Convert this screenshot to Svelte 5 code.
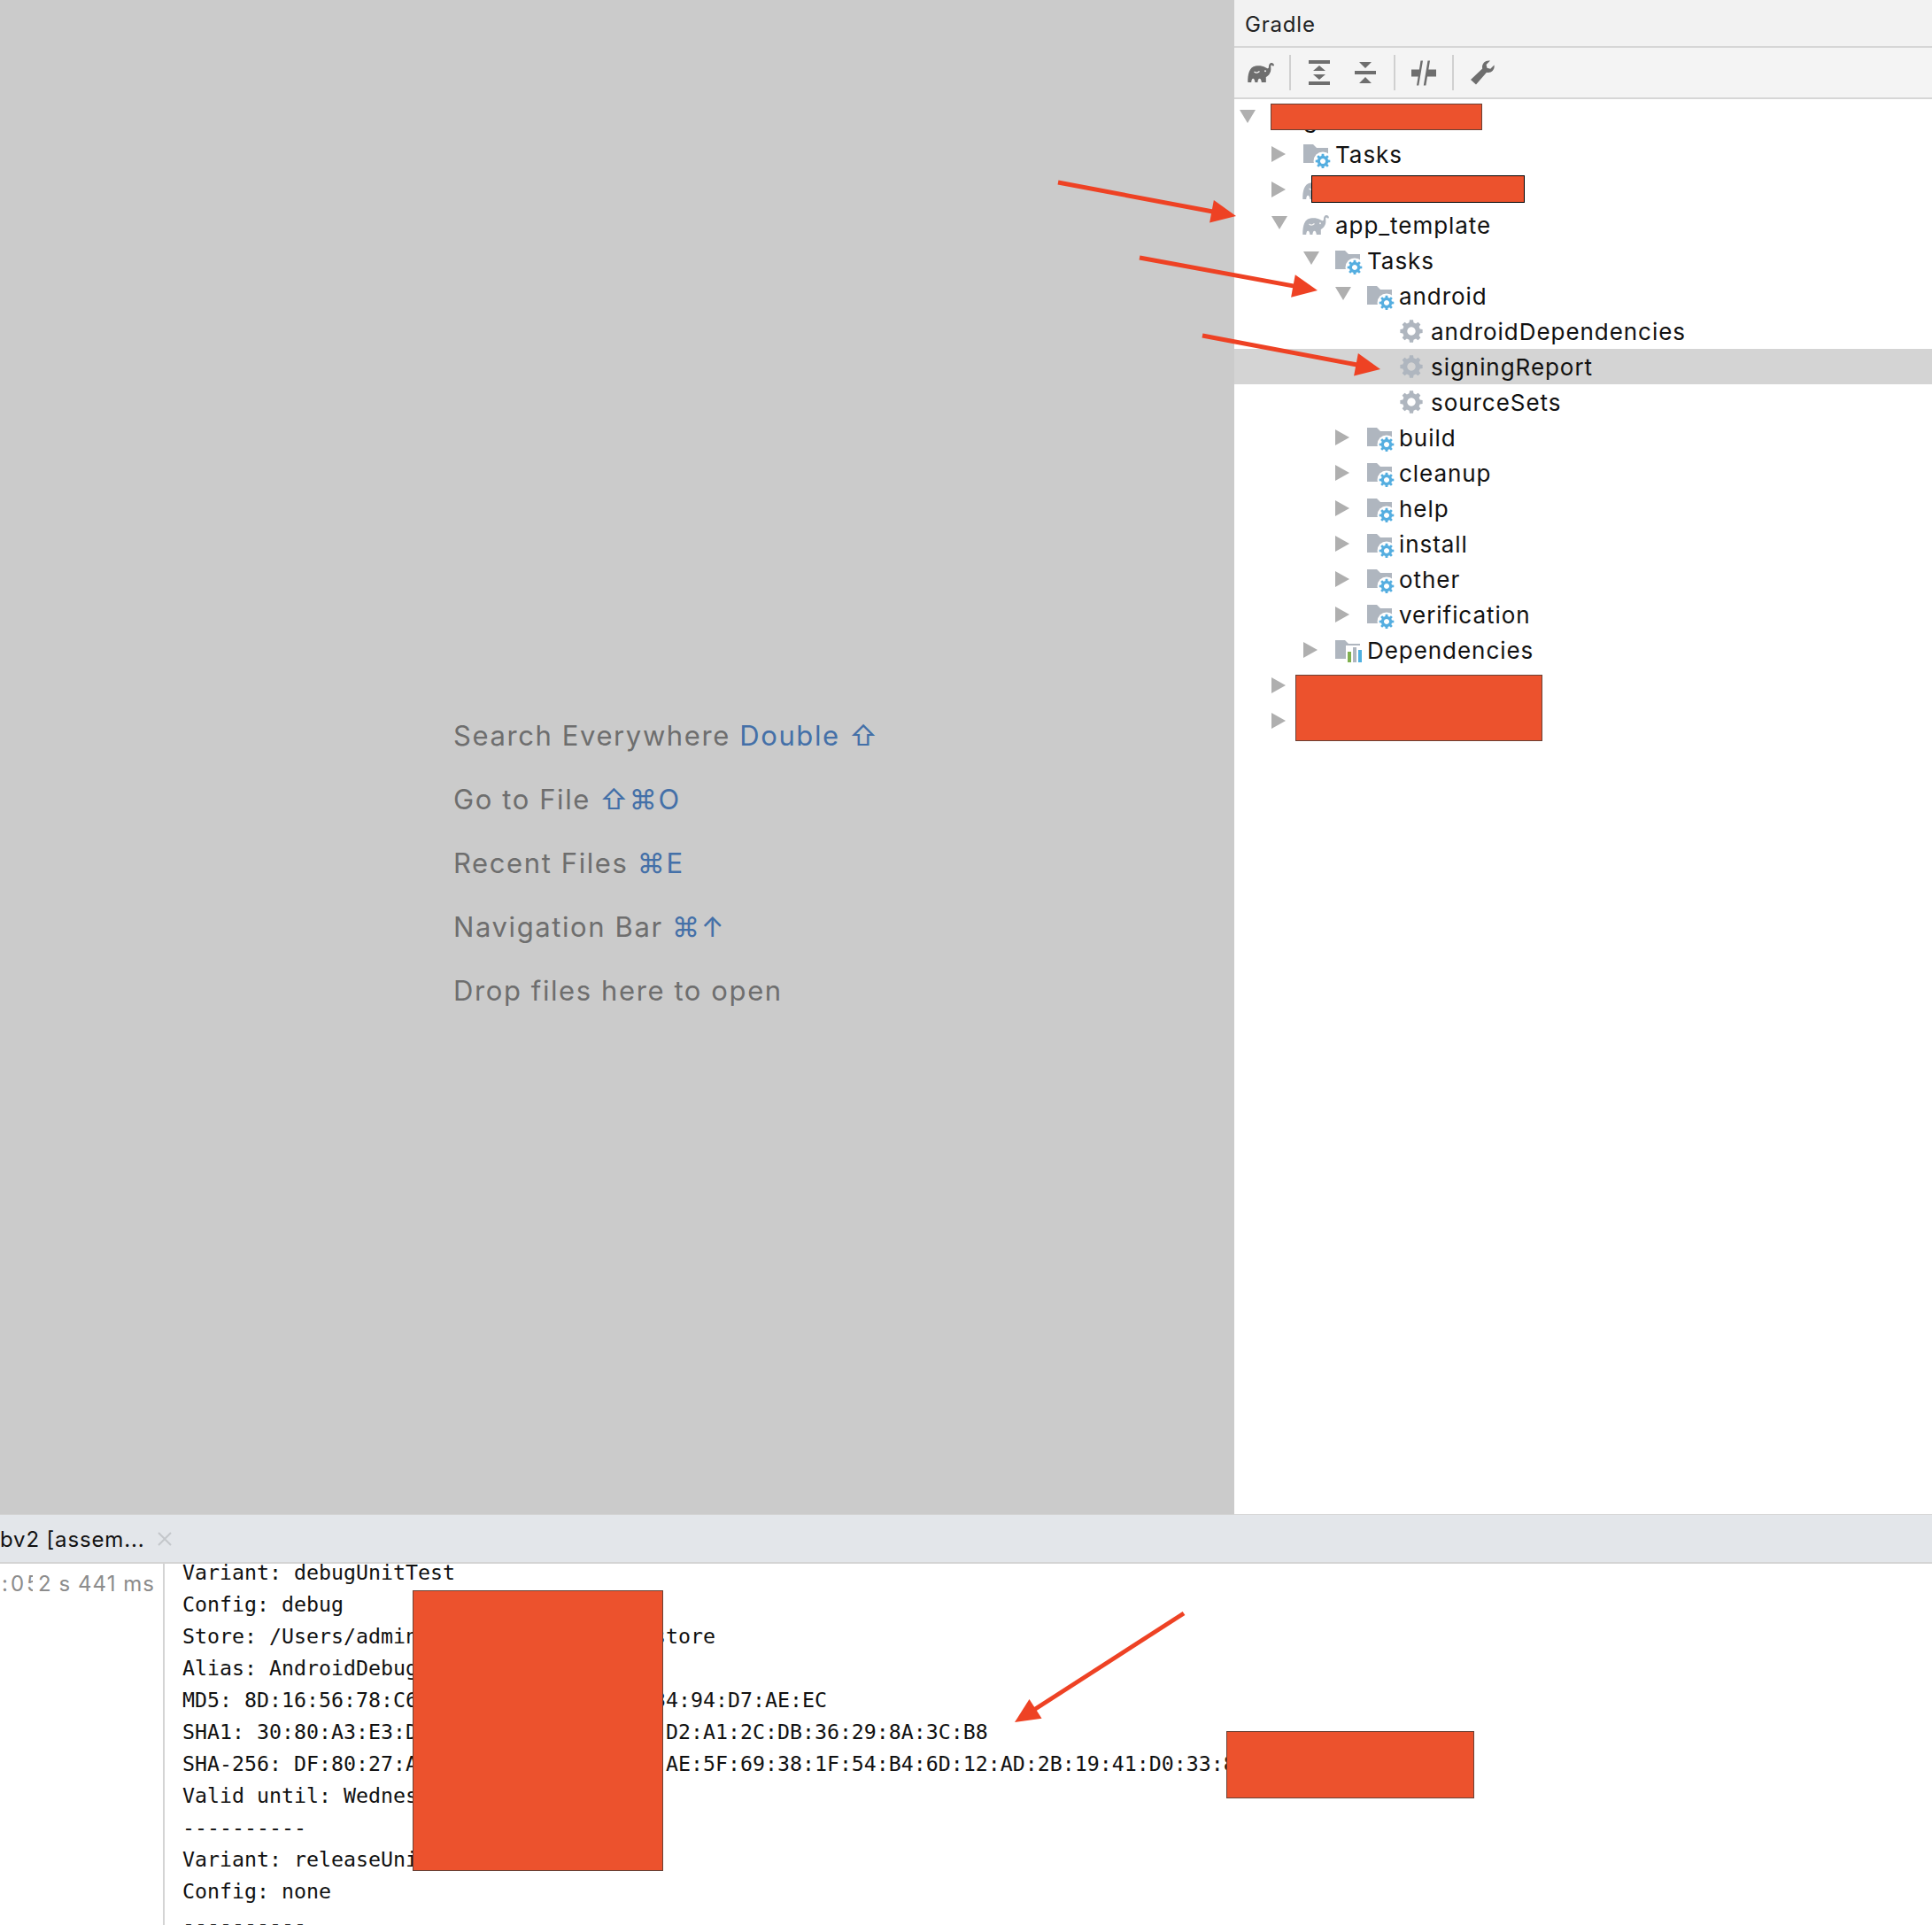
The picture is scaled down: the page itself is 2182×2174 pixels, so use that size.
<script>
  const rows = [
    { d: 0, open: true, icon: 'none', label: 'g' },
    { d: 1, icon: 'tasks', label: 'Tasks' },
    { d: 1, icon: 'ele', label: '' },
    { d: 1, open: true, icon: 'ele', label: 'app_template' },
    { d: 2, open: true, icon: 'tasks', label: 'Tasks' },
    { d: 3, open: true, icon: 'tasks', label: 'android' },
    { d: 4, leaf: true, icon: 'gear', label: 'androidDependencies' },
    { d: 4, leaf: true, icon: 'gear', label: 'signingReport', sel: true },
    { d: 4, leaf: true, icon: 'gear', label: 'sourceSets' },
    { d: 3, icon: 'tasks', label: 'build' },
    { d: 3, icon: 'tasks', label: 'cleanup' },
    { d: 3, icon: 'tasks', label: 'help' },
    { d: 3, icon: 'tasks', label: 'install' },
    { d: 3, icon: 'tasks', label: 'other' },
    { d: 3, icon: 'tasks', label: 'verification' },
    { d: 2, icon: 'deps', label: 'Dependencies' },
    { d: 1, icon: 'ele', label: '' },
    { d: 1, icon: 'ele', label: '' }
  ];

  const consoleLines = [
    'Variant: debugUnitTest',
    'Config: debug',
    'Store: /Users/admin/.android/debug.keystore',
    'Alias: AndroidDebugKey',
    'MD5: 8D:16:56:78:C6                   34:94:D7:AE:EC',
    'SHA1: 30:80:A3:E3:D                    D2:A1:2C:DB:36:29:8A:3C:B8',
    'SHA-256: DF:80:27:A                    AE:5F:69:38:1F:54:B4:6D:12:AD:2B:19:41:D0:33:8',
    'Valid until: Wednesday',
    '----------',
    'Variant: releaseUnitTest',
    'Config: none',
    '----------'
  ];

  const hints = [
    { t: 'Search Everywhere', k: 'Double ⇧' },
    { t: 'Go to File', k: '⇧⌘O' },
    { t: 'Recent Files', k: '⌘E' },
    { t: 'Navigation Bar', k: '⌘↑' },
    { t: 'Drop files here to open', k: '' }
  ];

  const boxes = [
    { c: 'box', x: 1435, y: 117, w: 239, h: 30 },
    { c: 'box dark', x: 1481, y: 198, w: 241, h: 31 },
    { c: 'box', x: 1463, y: 762, w: 279, h: 75 },
    { c: 'box', x: 466, y: 1796, w: 283, h: 317 },
    { c: 'box', x: 1385, y: 1955, w: 280, h: 76 }
  ];

  function gearPath(cx, cy, rOut, rIn, teeth) {
    let d = '';
    const step = (Math.PI * 2) / teeth;
    for (let i = 0; i < teeth; i++) {
      const a = i * step - Math.PI / 2;
      const pts = [
        [a - step * 0.32, rIn],
        [a - step * 0.2, rOut],
        [a + step * 0.2, rOut],
        [a + step * 0.32, rIn]
      ];
      for (const [an, r] of pts) {
        d += (d ? 'L' : 'M') + (cx + r * Math.cos(an)).toFixed(2) + ' ' + (cy + r * Math.sin(an)).toFixed(2);
      }
    }
    return d + 'Z';
  }

  function arrow(x1, y1, x2, y2) {
    const len = Math.hypot(x2 - x1, y2 - y1);
    const ux = (x2 - x1) / len;
    const uy = (y2 - y1) / len;
    const bx = x2 - ux * 28;
    const by = y2 - uy * 28;
    const nx = -uy * 13;
    const ny = ux * 13;
    return {
      x1, y1,
      x2: bx + ux * 4,
      y2: by + uy * 4,
      head: `${x2},${y2} ${bx + nx},${by + ny} ${bx - nx},${by - ny}`
    };
  }

  const arrows = [
    arrow(1195, 206, 1396, 244),
    arrow(1287, 291, 1488, 328),
    arrow(1358, 379, 1559, 417),
    arrow(1337, 1822, 1146, 1945)
  ];

  const ELE = 'M0.3 23C0 14 2 5.5 9 4.5C13 3.8 17 4.3 20 6C21.5 7 23.2 8 23.8 6.5C24.2 5 23.5 3 25.5 1.5C27.5 .3 29.8 1.5 30 4.2L28 4.4C27.8 3.2 26.4 3.1 26.2 4.6C26.2 7 27 10 25 13C24 15 22 16.5 20.8 17L20.8 23H15.8C15.6 20.5 14.8 18.8 13.5 18.8C12.2 18.8 11.6 20.5 11.4 23H8.4C8.2 20.5 7.4 18.8 6.2 18.8C5 18.8 4.4 20.5 4.2 23Z';
  const FOLDER = 'M0 0H11L15 4H28V21H0Z';
  const blueGear = gearPath(8, 8, 8.4, 6.2, 8);
  const grayGear = gearPath(13, 13, 12.8, 10, 8);
</script>

{#snippet elephant(cls)}
  <svg class={cls} width="30" height="24" viewBox="0 0 30 24">
    <path d={ELE} />
    <path class="eye" d="M7.5 11c2 1.6 4 1.4 6-.4" />
    <circle class="dot" cx="20" cy="10.2" r="1" />
  </svg>
{/snippet}

{#snippet treeIcon(kind)}
  {#if kind === 'tasks'}
    <svg class="ti" width="32" height="32" viewBox="0 0 32 32">
      <path class="fold" d={FOLDER} transform="translate(0 5)" />
      <g transform="translate(14 16)">
        <circle cx="8" cy="8" r="10.5" fill="#fff" />
        <path class="blue" fill-rule="evenodd" d="{blueGear}M8 5a3 3 0 1 0 .01 0Z" />
      </g>
    </svg>
  {:else if kind === 'deps'}
    <svg class="ti" width="32" height="32" viewBox="0 0 32 32">
      <path class="fold" d={FOLDER} transform="translate(0 5)" />
      <rect x="12" y="11" width="18" height="19" fill="#fff" />
      <rect x="14" y="18" width="4" height="12" fill="#7fb04f" />
      <rect x="20" y="13" width="4" height="17" fill="#afb6bf" />
      <rect x="26" y="16" width="4" height="14" fill="#4fb0e0" />
    </svg>
  {:else if kind === 'gear'}
    <svg class="ti gearicon" width="26" height="26" viewBox="0 0 26 26">
      <path class="fold" fill-rule="evenodd" d="{grayGear}M13 8.3a4.7 4.7 0 1 0 .01 0Z" />
    </svg>
  {:else if kind === 'ele'}
    {@render elephant('ele-tree')}
  {/if}
{/snippet}

<div class="root">
  <div class="top">
    <main class="welcome">
      {#each hints as h}
        <p class="hint">{h.t}{' '}<span class="key">{h.k}</span></p>
      {/each}
    </main>

    <aside class="gradle">
      <header class="title">Gradle</header>
      <div class="toolbar">
        <span class="slot">{@render elephant('ele-tool')}</span>
        <i class="sep"></i>
        <div class="group">
          <span class="slot">
            <svg width="24" height="28" viewBox="0 0 24 28" class="tool">
              <path d="M0 0H24V4H0ZM0 24H24V28H0ZM12 6L19 12H5ZM5 16H19L12 22Z" />
            </svg>
          </span>
          <span class="slot">
            <svg width="24" height="24" viewBox="0 0 24 24" class="tool">
              <path d="M0 10H24V14H0ZM5 0H19L12 7ZM12 17L19 24H5Z" />
            </svg>
          </span>
        </div>
        <i class="sep"></i>
        <span class="slot">
          <svg width="28" height="29" viewBox="0 0 28 28" class="tool">
            <path d="M0 10H9V18H0ZM17 10H28V18H17ZM10.5 0H13L8.3 28H6ZM18.5 0H21L16.4 28H13.8Z" />
          </svg>
        </span>
        <i class="sep"></i>
        <span class="slot">
          <svg width="28" height="28" viewBox="0 0 28 28" class="tool">
            <path d="M27.5 5.5C28.5 10.5 24.5 15 19 13.8L7 27.5L1 22L14.2 9.5C13 4 17.5 -.5 23 .6L18.6 5L19.5 8.8L23.2 9.8Z" />
          </svg>
        </span>
      </div>
      <div class="tree">
        {#each rows as r}
          <div class="row" class:sel={r.sel} style="padding-left:{6 + r.d * 36}px">
            <span class="chev">
              {#if !r.leaf}
                {#if r.open}
                  <svg class="down" width="18" height="15" viewBox="0 0 18 15"><path d="M0 0H18L9 15Z" /></svg>
                {:else}
                  <svg width="16" height="18" viewBox="0 0 16 18"><path d="M0 0L16 9L0 18Z" /></svg>
                {/if}
              {/if}
            </span>
            <span class="icon">{@render treeIcon(r.icon)}</span>
            <span class="label">{r.label}</span>
          </div>
        {/each}
      </div>
    </aside>
  </div>

  <section class="run">
    <div class="tabs">
      <span class="tabname">bv2 [assem...</span>
      <svg class="close" width="16" height="16" viewBox="0 0 16 16"><path d="M1 1L15 15M15 1L1 15" /></svg>
    </div>
    <div class="output">
      <div class="timecol">
        <span class="clip">:05</span><span class="dur">2 s 441 ms</span>
      </div>
      <pre class="log">{#each consoleLines as l}<div class="ln">{l}</div>{/each}</pre>
    </div>
  </section>

  {#each boxes as b}
    <div class={b.c} style="left:{b.x}px;top:{b.y}px;width:{b.w}px;height:{b.h}px"></div>
  {/each}

  <svg class="arrows" width="2182" height="2174" viewBox="0 0 2182 2174">
    {#each arrows as a}
      <line x1={a.x1} y1={a.y1} x2={a.x2} y2={a.y2} />
      <polygon points={a.head} />
    {/each}
  </svg>
</div>

<style>
  :global(body) {
    margin: 0;
    background: #fff;
  }
  .root {
    position: relative;
    width: 2182px;
    height: 2174px;
    overflow: hidden;
    display: flex;
    flex-direction: column;
    font-family: Inter, "DejaVu Sans", sans-serif;
    color: #111;
  }
  .top {
    display: flex;
    height: 1711px;
    flex: none;
    border-bottom: 1px solid #d4d4d4;
    box-sizing: border-box;
  }
  .welcome {
    width: 1394px;
    flex: none;
    background: #cbcbcb;
    box-sizing: border-box;
    padding: 795px 0 0 512px;
  }
  .hint {
    margin: 0;
    height: 72px;
    line-height: 72px;
    font-size: 31px;
    color: #6e6e6e;
    letter-spacing: 1.6px;
    white-space: nowrap;
  }
  .key {
    color: #4470a8;
  }
  .gradle {
    flex: 1;
    background: #fff;
    min-width: 0;
  }
  .title {
    height: 52px;
    line-height: 56px;
    background: #f2f2f2;
    border-bottom: 2px solid #d6d6d6;
    padding-left: 12px;
    font-size: 24px;
    letter-spacing: 0.8px;
    color: #222;
  }
  .toolbar {
    height: 58px;
    box-sizing: border-box;
    background: #f4f4f4;
    border-bottom: 2px solid #d6d6d6;
    display: flex;
    align-items: center;
    gap: 18px;
    padding-left: 16px;
  }
  .group {
    display: flex;
    gap: 24px;
  }
  .slot {
    width: 28px;
    display: flex;
    justify-content: center;
    align-items: center;
  }
  .sep {
    width: 2px;
    height: 40px;
    background: #d0d0d0;
  }
  .tool {
    fill: #6e6e6e;
  }
  .ele-tool {
    fill: #6e6e6e;
    flex: none;
  }
  .ele-tree {
    fill: #afb6bf;
    flex: none;
    margin-left: -1px;
  }
  .eye {
    fill: none;
    stroke: #f4f4f4;
    stroke-width: 1.3;
  }
  .dot {
    fill: #f4f4f4;
  }
  .tree {
    padding-top: 2px;
  }
  .row {
    height: 40px;
    display: flex;
    align-items: center;
    box-sizing: border-box;
  }
  .row.sel {
    background: #d4d4d4;
  }
  .chev {
    width: 36px;
    flex: none;
    display: flex;
    align-items: center;
  }
  .chev svg {
    fill: #afafaf;
  }
  .chev svg.down {
    margin-top: -5px;
  }
  .icon {
    width: 36px;
    height: 40px;
    flex: none;
    display: flex;
    align-items: center;
  }
  .ti {
    flex: none;
  }
  .gearicon {
    margin-left: 1px;
  }
  .fold {
    fill: #afb6bf;
  }
  .blue {
    fill: #55aee0;
  }
  .label {
    font-size: 26px;
    letter-spacing: 0.95px;
    color: #111;
    white-space: nowrap;
  }
  .run {
    flex: 1;
    min-height: 0;
    display: flex;
    flex-direction: column;
  }
  .tabs {
    height: 55px;
    flex: none;
    box-sizing: border-box;
    background: #e3e6ea;
    border-bottom: 2px solid #d4d4d4;
    display: flex;
    align-items: center;
    gap: 15px;
  }
  .tabname {
    font-size: 24px;
    letter-spacing: 0.85px;
    color: #111;
    white-space: nowrap;
    padding-top: 2px;
  }
  .close {
    fill: none;
    stroke: #c4c7cb;
    stroke-width: 2;
  }
  .output {
    flex: 1;
    min-height: 0;
    display: flex;
    overflow: hidden;
  }
  .timecol {
    flex: none;
    box-sizing: border-box;
    border-right: 2px solid #d4d4d4;
    width: 186px;
    display: flex;
    padding: 6px 0 0 2px;
    font-size: 24px;
    line-height: 34px;
    color: #8c8c8c;
    white-space: nowrap;
  }
  .clip {
    width: 35px;
    overflow: hidden;
    flex: none;
    letter-spacing: 3px;
  }
  .dur {
    margin-left: 6px;
    letter-spacing: 1.05px;
  }
  .log {
    margin: -8px 0 0 20px;
    font-family: "DejaVu Sans Mono", monospace;
    font-size: 23.25px;
    line-height: 36px;
    color: #111;
  }
  .ln {
    height: 36px;
    white-space: pre;
  }
  .box {
    position: absolute;
    box-sizing: border-box;
    background: #ec522d;
    border: 1px solid #6a4034;
  }
  .box.dark {
    border-color: #000;
  }
  .arrows {
    position: absolute;
    left: 0;
    top: 0;
    pointer-events: none;
  }
  .arrows line {
    stroke: #ee4224;
    stroke-width: 5;
  }
  .arrows polygon {
    fill: #ee4224;
  }
</style>
